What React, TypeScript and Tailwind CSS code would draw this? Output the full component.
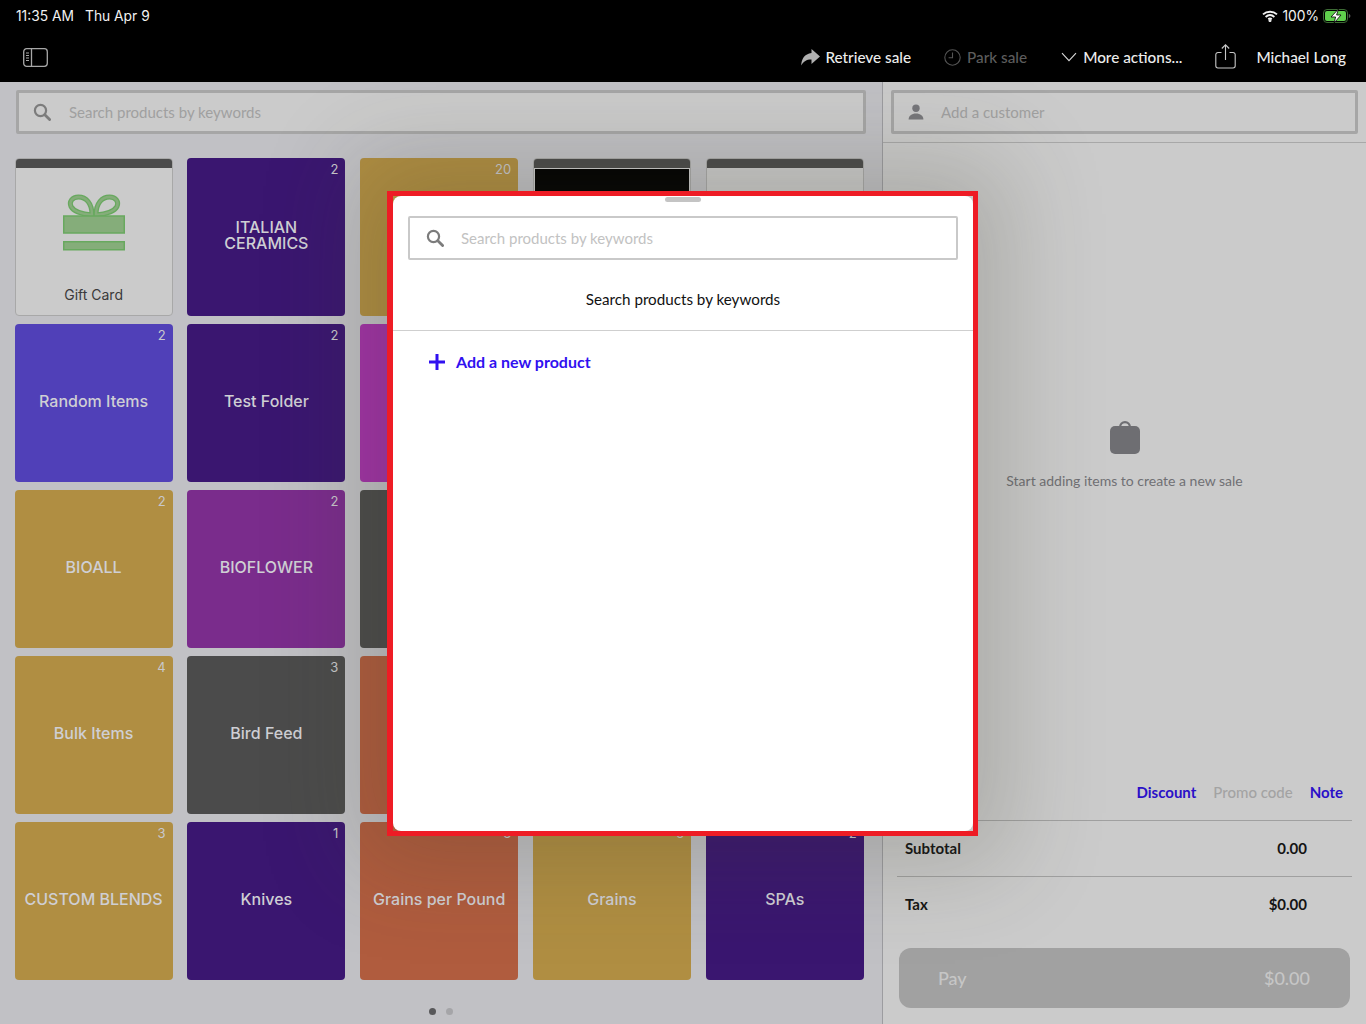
import React from "react";

type Tile = {
  label?: string;
  count?: number;
  color: string;
  kind?: "gift" | "image" | "blank";
  caps?: boolean;
};

const tiles: Tile[] = [
  { label: "Gift Card", color: "bg-[#cbcbcb]", kind: "gift" },
  { label: "ITALIAN CERAMICS", count: 2, color: "bg-[#3a1670]", caps: true },
  { label: "", count: 20, color: "bg-[#b08e42]" },
  { color: "bg-black", kind: "image" },
  { color: "bg-[#cbcbcb]", kind: "blank" },
  { label: "Random Items", count: 2, color: "bg-[#5040b8]" },
  { label: "Test Folder", count: 2, color: "bg-[#3a1670]" },
  { label: "", color: "bg-[#a232a8]" },
  { label: "", color: "bg-[#b08e42]" },
  { label: "", color: "bg-[#3a1670]" },
  { label: "BIOALL", count: 2, color: "bg-[#b08e42]" },
  { label: "BIOFLOWER", count: 2, color: "bg-[#7a2c8c]" },
  { label: "", color: "bg-[#4b4b4b]" },
  { label: "", color: "bg-[#b08e42]" },
  { label: "", color: "bg-[#3a1670]" },
  { label: "Bulk Items", count: 4, color: "bg-[#b08e42]" },
  { label: "Bird Feed", count: 3, color: "bg-[#4b4b4b]" },
  { label: "", color: "bg-[#b05c3e]" },
  { label: "", color: "bg-[#b08e42]" },
  { label: "", color: "bg-[#3a1670]" },
  { label: "CUSTOM BLENDS", count: 3, color: "bg-[#b08e42]" },
  { label: "Knives", count: 1, color: "bg-[#3a1670]" },
  { label: "Grains per Pound", count: 3, color: "bg-[#b05c3e]" },
  { label: "Grains", count: 6, color: "bg-[#b08e42]" },
  { label: "SPAs", count: 2, color: "bg-[#3a1670]" },
];

function SearchIcon({ className }: { className?: string }) {
  return (
    <svg viewBox="0 0 18 18" className={className} fill="none" stroke="currentColor">
      <circle cx="7.5" cy="7.5" r="5.6" strokeWidth="2.2" />
      <path d="M11.8 11.8 16.6 16.6" strokeWidth="2.8" strokeLinecap="round" />
    </svg>
  );
}

function GiftIcon() {
  const left = "M29 21C29 9 23 3 15.5 3C9 3 6 8 8 12.5C10.5 17 18 20 29 21Z";
  const right = "M33 21C33 9 39 3 46.5 3C53 3 56 8 54 12.5C51.5 17 44 20 33 21Z";
  return (
    <svg width="62" height="57" viewBox="0 0 62 57" fill="none">
      <path d={left} stroke="#68a95f" strokeWidth="5" />
      <path d={right} stroke="#68a95f" strokeWidth="5" />
      <path d={left} stroke="#85ad7a" strokeWidth="2.4" />
      <path d={right} stroke="#85ad7a" strokeWidth="2.4" />
      <rect x=".75" y="22" width="60.5" height="17" fill="#85ad7a" stroke="#68a95f" strokeWidth="1.5" />
      <rect x=".75" y="47.75" width="60.5" height="8" fill="#85ad7a" stroke="#68a95f" strokeWidth="1.5" />
    </svg>
  );
}

function ProductTile({ tile }: { tile: Tile }) {
  if (tile.kind) {
    return (
      <div className={`relative flex h-[158px] flex-col overflow-hidden rounded border border-[#a8a8a8] ${tile.kind === "image" ? "bg-[#cbcbcb]" : tile.color}`}>
        <div className="h-[9px] shrink-0 bg-[#4b4b4b]" />
        {tile.kind === "gift" && (
          <div className="flex grow flex-col items-center pt-[26px]">
            <GiftIcon />
            <span className="mt-auto pb-[10px] font-['Inter'] text-[14px] text-[#3a3a3a]">{tile.label}</span>
          </div>
        )}
        {tile.kind === "image" && <div className="mx-px mt-px grow bg-black" />}
      </div>
    );
  }

  return (
    <div className={`relative flex h-[158px] items-center justify-center rounded px-2 pb-[4px] text-center font-['Inter'] text-[16px] font-medium text-[#cfcfd4] ${tile.color} ${tile.caps ? "leading-[16px]" : ""}`}>
      {tile.count !== undefined && (
        <span className="absolute right-[7px] top-[3px] text-[13px] font-normal leading-[16px] text-[#c8c8cc]">{tile.count}</span>
      )}
      <span className={tile.caps ? "max-w-[100px]" : ""}>{tile.label}</span>
    </div>
  );
}

function StatusBar() {
  return (
    <div className="flex h-[32px] items-center justify-between pl-[16px] pr-[15px] font-['Inter'] text-[13.8px] text-[#f2f2f2]">
      <div className="flex gap-[11px]">
        <span>11:35 AM</span>
        <span>Thu Apr 9</span>
      </div>
      <div className="flex items-center gap-[4px]">
        <svg width="16" height="12" viewBox="0 0 16 12" fill="none" stroke="#f2f2f2" strokeWidth="1.9">
          <path d="M1 4.4C5 .8 11 .8 15 4.4" />
          <path d="M3.6 6.9c2.6-2.2 6.2-2.2 8.8 0" />
          <path d="M6.2 9.2c1.1-.8 2.5-.8 3.6 0" />
          <circle cx="8" cy="10.5" r=".6" fill="#f2f2f2" />
        </svg>
        <span>100%</span>
        <svg width="28" height="14" viewBox="0 0 28 14">
          <rect x=".5" y=".5" width="24" height="13" rx="3.5" fill="none" stroke="#3d6b35" />
          <rect x="2" y="2" width="21" height="10" rx="2" fill="#5fd04c" />
          <path d="M25.8 5v4c1-.3 1.6-1 1.6-2s-.6-1.7-1.6-2Z" fill="#5a5a5a" />
          <path d="M15.5 0 8 8h4.6l-1.5 6L18 6h-4.4Z" fill="#fff" stroke="#000" strokeWidth=".8" />
        </svg>
      </div>
    </div>
  );
}

function Toolbar() {
  return (
    <div className="flex h-[50px] items-center justify-between pl-[23px] pr-[20px] font-['Lato'] text-[15.3px] font-medium text-[#ececec]">
      <svg width="25" height="19" viewBox="0 0 25 19" fill="none" stroke="#a8a8a8" strokeWidth="1.3">
        <rect x=".7" y=".7" width="23.6" height="17.6" rx="3" />
        <path d="M8.5 .7v17.6" />
        <path d="M3 5h3M3 7.5h3M3 10h3M3 12.5h3" strokeWidth="1" />
      </svg>
      <div className="flex items-center">
        <svg width="19" height="17" viewBox="0 0 19 17" fill="#b0b0b0" className="mr-[5px]">
          <path d="M10.5 0 19 7.5 10.5 15V10.6C6 10.4 2.8 12 .2 16.6.4 10 3.6 4.8 10.5 4Z" />
        </svg>
        <span>Retrieve sale</span>
        <svg width="17" height="17" viewBox="0 0 17 17" fill="none" stroke="#555" strokeWidth="1.1" className="ml-[33px] mr-[6px]">
          <circle cx="8.5" cy="8.5" r="7.7" />
          <path d="M8.5 3.5v5.2H4.6" />
        </svg>
        <span className="text-[#5c5c5c]">Park sale</span>
        <svg width="16" height="10" viewBox="0 0 16 10" fill="none" stroke="#d8d8d8" strokeWidth="1.1" className="ml-[34px] mr-[6px]">
          <path d="M1 1.2 8 8.6 15 1.2" />
        </svg>
        <span>More actions...</span>
        <svg width="21" height="25" viewBox="0 0 21 25" fill="none" stroke="#c8c8c8" strokeWidth="1.1" className="mb-[2px] ml-[33px] mr-[20px]">
          <path d="M6.5 8.5H3A2.2 2.2 0 0 0 .8 10.7v11.1A2.2 2.2 0 0 0 3 24h15a2.2 2.2 0 0 0 2.2-2.2V10.7A2.2 2.2 0 0 0 18 8.5h-3.5" />
          <path d="M10.5 16V1M6.8 4.5l3.7-3.7 3.7 3.7" />
        </svg>
        <span>Michael Long</span>
      </div>
    </div>
  );
}

function SummaryRow({ label, value, last }: { label: string; value: string; last?: boolean }) {
  return (
    <div className={`mx-[14px] flex items-center justify-between pl-[8px] pr-[45px] font-['Lato'] text-[15px] font-bold text-[#141414] ${last ? "h-[55px]" : "h-[56px] border-b border-[#a0a0a0]"}`}>
      <span>{label}</span>
      <span>{value}</span>
    </div>
  );
}

function SaleSheet() {
  return (
    <div className="absolute left-[387px] top-[191px] h-[645px] w-[591px] border-[5px] border-l-[6px] border-[#ee1c25] shadow-[0_0_90px_30px_rgba(60,60,40,0.22)]">
      <div className="relative h-full rounded-[8px] bg-white font-['Lato']">
        <div className="absolute left-1/2 top-[1px] h-[5px] w-[36px] -translate-x-1/2 rounded-full bg-[#c4c4c4]" />
        <div className="px-[15px] pt-[20px]">
          <div className="flex h-[44px] items-center rounded-[2px] border-2 border-[#c9c9c9] pl-[16px]">
            <SearchIcon className="h-[18px] w-[18px] text-[#7c7c7c]" />
            <span className="ml-[17px] text-[15px] text-[#c2c2c2]">Search products by keywords</span>
          </div>
        </div>
        <div className="flex h-[71px] items-center justify-center border-b border-[#cfcfcf] pt-[8px] text-[15.2px] text-[#111]">
          Search products by keywords
        </div>
        <div className="flex h-[62px] items-center gap-[10px] pl-[35px] text-[16px] font-bold text-[#3010f0]">
          <svg width="18" height="18" viewBox="0 0 18 18" fill="none" stroke="#3010f0" strokeWidth="3">
            <path d="M9 1v16M1 9h16" />
          </svg>
          <span>Add a new product</span>
        </div>
      </div>
    </div>
  );
}

export default function App() {
  return (
    <div className="relative flex h-[1024px] w-[1366px] flex-col overflow-hidden bg-black">
      <div className="h-[82px] shrink-0 bg-black">
        <StatusBar />
        <Toolbar />
      </div>

      <div className="flex grow">
        <main className="flex w-[883px] shrink-0 flex-col border-r border-[#9c9ca0] bg-[#c1c1c5] font-['Lato']">
          <div className="mx-[16px] mt-[8px] flex h-[44px] w-[850px] items-center rounded-[2px] border-[3px] border-[#a6a6a6] bg-[#cbcbcb] pl-[14px]">
            <SearchIcon className="h-[18px] w-[18px] text-[#7c7c7c]" />
            <span className="ml-[18px] text-[15px] text-[#a0a0a0]">Search products by keywords</span>
          </div>
          <div className="ml-[14.6px] mt-[24px] grid grid-cols-[repeat(5,158px)] gap-x-[14.8px] gap-y-[8px]">
            {tiles.map((tile, i) => (
              <ProductTile key={i} tile={tile} />
            ))}
          </div>
          <div className="mt-[28px] flex justify-center gap-[10px] pr-[1px]">
            <span className="h-[7px] w-[7px] rounded-full bg-[#58585a]" />
            <span className="h-[7px] w-[7px] rounded-full bg-[#a5a5a8]" />
          </div>
        </main>

        <aside className="flex grow flex-col bg-[#cbcbcb] font-['Lato']">
          <div className="h-[61px] shrink-0 border-b border-[#a8a8a8] px-[8px] pt-[8px]">
            <div className="flex h-[44px] items-center rounded-[2px] border-[3px] border-[#a6a6a6] pl-[14px]">
              <svg width="16" height="16" viewBox="0 0 16 16" fill="#77777b">
                <circle cx="8" cy="4.2" r="3.7" />
                <path d="M.6 15.5c0-3.6 3-6 7.4-6s7.4 2.4 7.4 6Z" />
              </svg>
              <span className="ml-[17px] text-[15px] text-[#a0a0a0]">Add a customer</span>
            </div>
          </div>

          <div className="flex h-[619px] flex-col items-center pt-[278px]">
            <svg width="30" height="33" viewBox="0 0 30 33" fill="#6e6e72">
              <path d="M9 7V6a6 6 0 0 1 12 0v1h-2.2V6a3.8 3.8 0 0 0-7.6 0v1Z" />
              <rect y="5" width="30" height="28" rx="5" />
            </svg>
            <span className="mt-[16px] text-[14px] text-[#707074]">Start adding items to create a new sale</span>
          </div>

          <div className="flex h-[58px] items-center justify-end gap-[17px] pr-[23px] pt-[2px] text-[15px] font-bold">
            <span className="text-[#2a10c8]">Discount</span>
            <span className="font-medium text-[#a3a3a3]">Promo code</span>
            <span className="text-[#2a10c8]">Note</span>
          </div>
          <div className="mx-[14px] border-t border-[#a0a0a0]" />
          <SummaryRow label="Subtotal" value="0.00" />
          <SummaryRow label="Tax" value="$0.00" last />
          <div className="mx-[16px] mt-[16px] flex h-[60px] items-center justify-between rounded-[12px] bg-[#a1a1a1] pl-[39px] pr-[40px] text-[18px] font-medium text-[#c6c6c6]">
            <span>Pay</span>
            <span>$0.00</span>
          </div>
        </aside>
      </div>

      <SaleSheet />
    </div>
  );
}
